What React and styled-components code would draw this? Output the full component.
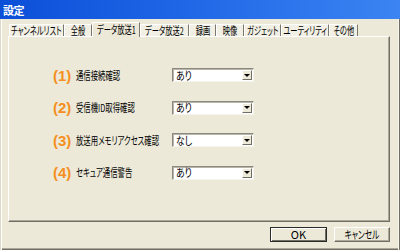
import React from 'react';
import styled, { createGlobalStyle } from 'styled-components';

const GlobalStyle = createGlobalStyle`
  html, body {
    margin: 0;
    padding: 0;
    width: 400px;
    height: 250px;
    overflow: hidden;
    background: #ece9d8;
  }
  * { box-sizing: border-box; }
`;

const Window = styled.div`
  width: 400px;
  height: 250px;
  display: flex;
  flex-direction: column;
  background: #ece9d8;
  font-family: "Noto Sans CJK JP", sans-serif;
  font-feature-settings: "palt";
  color: #000;
  box-shadow:
    inset 1px 0 0 #dcd8c8,
    inset 2px 0 0 #ffffff,
    inset -1px 0 0 #716f64,
    inset -2px 0 0 #f6f5ef,
    inset 0 -1px 0 #716f64,
    inset 0 -2px 0 #aca899;
`;

const TitleBar = styled.div`
  height: 19px;
  flex: none;
  display: flex;
  align-items: center;
  padding-left: 3px;
  background: linear-gradient(to right, #0b4fd8 0%, #1f66e6 45%, #3b84f2 100%);
  color: #fff;
  font-size: 11px;
  font-weight: bold;
  letter-spacing: -0.5px;
`;

const Body = styled.div`
  flex: 1;
  display: flex;
  flex-direction: column;
  padding: 3px 10px 0 8px;
`;

const TabStrip = styled.div`
  display: flex;
  align-items: flex-end;
  height: 14px;
  padding-left: 1px;
  position: relative;
  z-index: 1;
`;

const Tab = styled.div`
  flex: none;
  width: ${p => p.$w}px;
  height: ${p => (p.$active ? 15 : 12)}px;
  margin-bottom: ${p => (p.$active ? -1 : 0)}px;
  display: flex;
  align-items: center;
  justify-content: center;
  white-space: nowrap;
  font-size: 11px;
  line-height: 1;
  background: ${p => (p.$active ? '#ece9d8' : '#f2f0e4')};
  border-top: 1px solid #ffffff;
  border-left: 1px solid #ffffff;
  border-right: 1px solid #7a786c;
  padding-bottom: ${p => (p.$active ? 2 : 0)}px;
`;

// MS UI Gothic style narrow glyphs
const Narrow = styled.span`
  display: inline-block;
  white-space: nowrap;
  transform: scaleX(${p => p.$scale || 0.75});
  transform-origin: ${p => p.$origin || 'center'};
`;

const Panel = styled.div`
  height: 186px;
  border-top: 1px solid #ffffff;
  border-left: 1px solid #ffffff;
  border-right: 1px solid #716f64;
  border-bottom: 1px solid #716f64;
  box-shadow: inset -1px -1px 0 #aca899;
  padding: 30px 0 0 44px;
  display: flex;
  flex-direction: column;
  gap: 16.5px;
`;

const Row = styled.div`
  display: grid;
  grid-template-columns: 22px 97px 82px;
  align-items: center;
  height: 16px;
`;

const Num = styled.span`
  font-family: "Liberation Sans", Arial, sans-serif;
  font-weight: bold;
  font-size: 15px;
  color: #f5901e;
  line-height: 1;
`;

const Label = styled.span`
  font-size: 11px;
  white-space: nowrap;
  padding-left: 1px;
  line-height: 1;
`;

const Select = styled.div`
  width: 82px;
  height: 14px;
  background: #fff;
  border-top: 1px solid #8c8a7e;
  border-left: 1px solid #8c8a7e;
  border-right: 1px solid #f4f3ec;
  border-bottom: 1px solid #f4f3ec;
  box-shadow: inset 1px 1px 0 #b8b5a8;
  display: flex;
  align-items: center;
  justify-content: space-between;
  padding: 0 1px 0 3px;
  font-size: 11px;
  line-height: 1;
`;

const ArrowButton = styled.div`
  width: 10px;
  height: 10px;
  background: #ece9d8;
  border-top: 1px solid #fff;
  border-left: 1px solid #fff;
  border-right: 1px solid #716f64;
  border-bottom: 1px solid #716f64;
  display: flex;
  align-items: center;
  justify-content: center;

  &::after {
    content: '';
    border-left: 3px solid transparent;
    border-right: 3px solid transparent;
    border-top: 3px solid #000;
  }
`;

const Footer = styled.div`
  display: flex;
  justify-content: flex-end;
  gap: 7px;
  padding-top: 5px;
`;

const Button = styled.div`
  width: ${p => p.$w}px;
  height: 15px;
  display: flex;
  align-items: center;
  justify-content: center;
  font-size: 11px;
  line-height: 1;
  background: #ece9d8;
  border: 1px solid ${p => (p.$default ? '#2a2a2a' : '#ffffff')};
  ${p => !p.$default && 'border-right-color: #716f64; border-bottom-color: #716f64;'}
  box-shadow: ${p =>
    p.$default
      ? 'inset 1px 1px 0 #fff, inset -1px -1px 0 #716f64'
      : 'inset -1px -1px 0 #aca899'};
`;

const tabs = [
  ['チャンネルリスト', 55],
  ['全般', 28],
  ['データ放送1', 48],
  ['データ放送2', 49],
  ['録画', 27],
  ['映像', 28],
  ['ガジェット', 37],
  ['ユーティリティ', 48],
  ['その他', 29],
];

const settings = [
  ['(1)', '通信接続確認', 'あり'],
  ['(2)', '受信機ID取得確認', 'あり'],
  ['(3)', '放送用メモリアクセス確認', 'なし'],
  ['(4)', 'セキュア通信警告', 'あり'],
];

const App = () => {
  return (
    <Window>
      <GlobalStyle />
      <TitleBar>設定</TitleBar>
      <Body>
        <TabStrip>
          {tabs.map(([name, w]) => (
            <Tab key={name} $w={w} $active={name === 'データ放送1'}>
              <Narrow $scale={0.66}>{name}</Narrow>
            </Tab>
          ))}
        </TabStrip>
        <Panel>
          {settings.map(([num, label, value]) => (
            <Row key={num}>
              <Num>{num}</Num>
              <Label>
                <Narrow $scale={0.67} $origin="left">{label}</Narrow>
              </Label>
              <Select>
                <Narrow $scale={0.8} $origin="left">{value}</Narrow>
                <ArrowButton />
              </Select>
            </Row>
          ))}
        </Panel>
        <Footer>
          <Button $w={57} $default>OK</Button>
          <Button $w={56}>
            <Narrow $scale={0.7}>キャンセル</Narrow>
          </Button>
        </Footer>
      </Body>
    </Window>
  );
};

export default App;
